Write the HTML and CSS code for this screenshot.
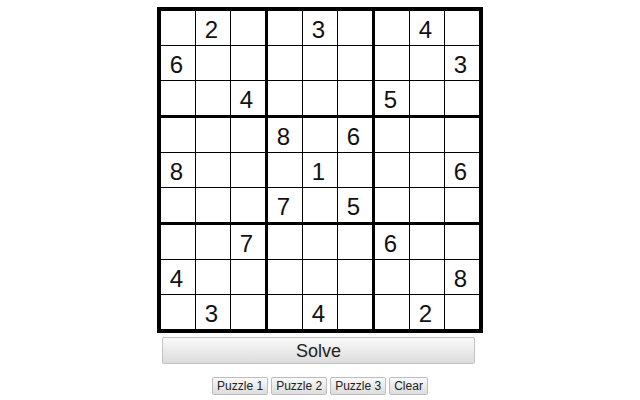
FILE: index.html
```html
<!DOCTYPE html>
<html>
<head>
<meta charset="utf-8">
<link rel="stylesheet" href="styles.css">
</head>
<body>
<div class="app">
  <div class="board">
    <div class="box">
      <div class="cell"></div><div class="cell">2</div><div class="cell"></div>
      <div class="cell">6</div><div class="cell"></div><div class="cell"></div>
      <div class="cell"></div><div class="cell"></div><div class="cell">4</div>
    </div>
    <div class="box">
      <div class="cell"></div><div class="cell">3</div><div class="cell"></div>
      <div class="cell"></div><div class="cell"></div><div class="cell"></div>
      <div class="cell"></div><div class="cell"></div><div class="cell"></div>
    </div>
    <div class="box">
      <div class="cell"></div><div class="cell">4</div><div class="cell"></div>
      <div class="cell"></div><div class="cell"></div><div class="cell">3</div>
      <div class="cell">5</div><div class="cell"></div><div class="cell"></div>
    </div>
    <div class="box">
      <div class="cell"></div><div class="cell"></div><div class="cell"></div>
      <div class="cell">8</div><div class="cell"></div><div class="cell"></div>
      <div class="cell"></div><div class="cell"></div><div class="cell"></div>
    </div>
    <div class="box">
      <div class="cell">8</div><div class="cell"></div><div class="cell">6</div>
      <div class="cell"></div><div class="cell">1</div><div class="cell"></div>
      <div class="cell">7</div><div class="cell"></div><div class="cell">5</div>
    </div>
    <div class="box">
      <div class="cell"></div><div class="cell"></div><div class="cell"></div>
      <div class="cell"></div><div class="cell"></div><div class="cell">6</div>
      <div class="cell"></div><div class="cell"></div><div class="cell"></div>
    </div>
    <div class="box">
      <div class="cell"></div><div class="cell"></div><div class="cell">7</div>
      <div class="cell">4</div><div class="cell"></div><div class="cell"></div>
      <div class="cell"></div><div class="cell">3</div><div class="cell"></div>
    </div>
    <div class="box">
      <div class="cell"></div><div class="cell"></div><div class="cell"></div>
      <div class="cell"></div><div class="cell"></div><div class="cell"></div>
      <div class="cell"></div><div class="cell">4</div><div class="cell"></div>
    </div>
    <div class="box">
      <div class="cell">6</div><div class="cell"></div><div class="cell"></div>
      <div class="cell"></div><div class="cell"></div><div class="cell">8</div>
      <div class="cell"></div><div class="cell">2</div><div class="cell"></div>
    </div>
  </div>
  <button class="solve">Solve</button>
  <div class="presets">
    <button class="small">Puzzle 1</button>
    <button class="small">Puzzle 2</button>
    <button class="small">Puzzle 3</button>
    <button class="small">Clear</button>
  </div>
</div>
</body>
</html>
```
FILE: styles.css
```css
html, body {
  margin: 0;
  padding: 0;
  background: #fff;
}
body {
  font-family: "Liberation Sans", Arial, sans-serif;
  color: #111;
}
.app {
  display: flex;
  flex-direction: column;
  align-items: center;
  padding-top: 7px;
}
.board {
  display: grid;
  grid-template-columns: repeat(3, 104px);
  grid-template-rows: repeat(3, 104px);
  gap: 3px;
  border: 4px solid #000;
  background: #000;
}
.box {
  display: grid;
  grid-template-columns: repeat(3, 34px);
  grid-template-rows: repeat(3, 34px);
  gap: 1px;
  background: #000;
}
.cell {
  background: #fff;
  display: flex;
  align-items: center;
  justify-content: center;
  font-size: 24px;
  line-height: 24px;
  padding-top: 4px;
  padding-right: 3px;
  box-sizing: border-box;
  color: #111;
}
.solve {
  margin-top: 4px;
  margin-left: -3px;
  width: 313px;
  height: 27px;
  font-family: "Liberation Sans", Arial, sans-serif;
  font-size: 18px;
  color: #222;
  background: linear-gradient(#fafafa, #dcdcdc);
  border: 1px solid #c2c2c2;
  border-radius: 2px;
  padding: 1px 0 0;
}
.presets {
  margin-top: 13px;
  display: flex;
  gap: 3px;
}
.small {
  height: 18px;
  padding: 0 4px;
  font-family: "Liberation Sans", Arial, sans-serif;
  font-size: 12px;
  color: #222;
  background: linear-gradient(#fafafa, #dcdcdc);
  border: 1px solid #bdbdbd;
  border-radius: 2px;
}
```
